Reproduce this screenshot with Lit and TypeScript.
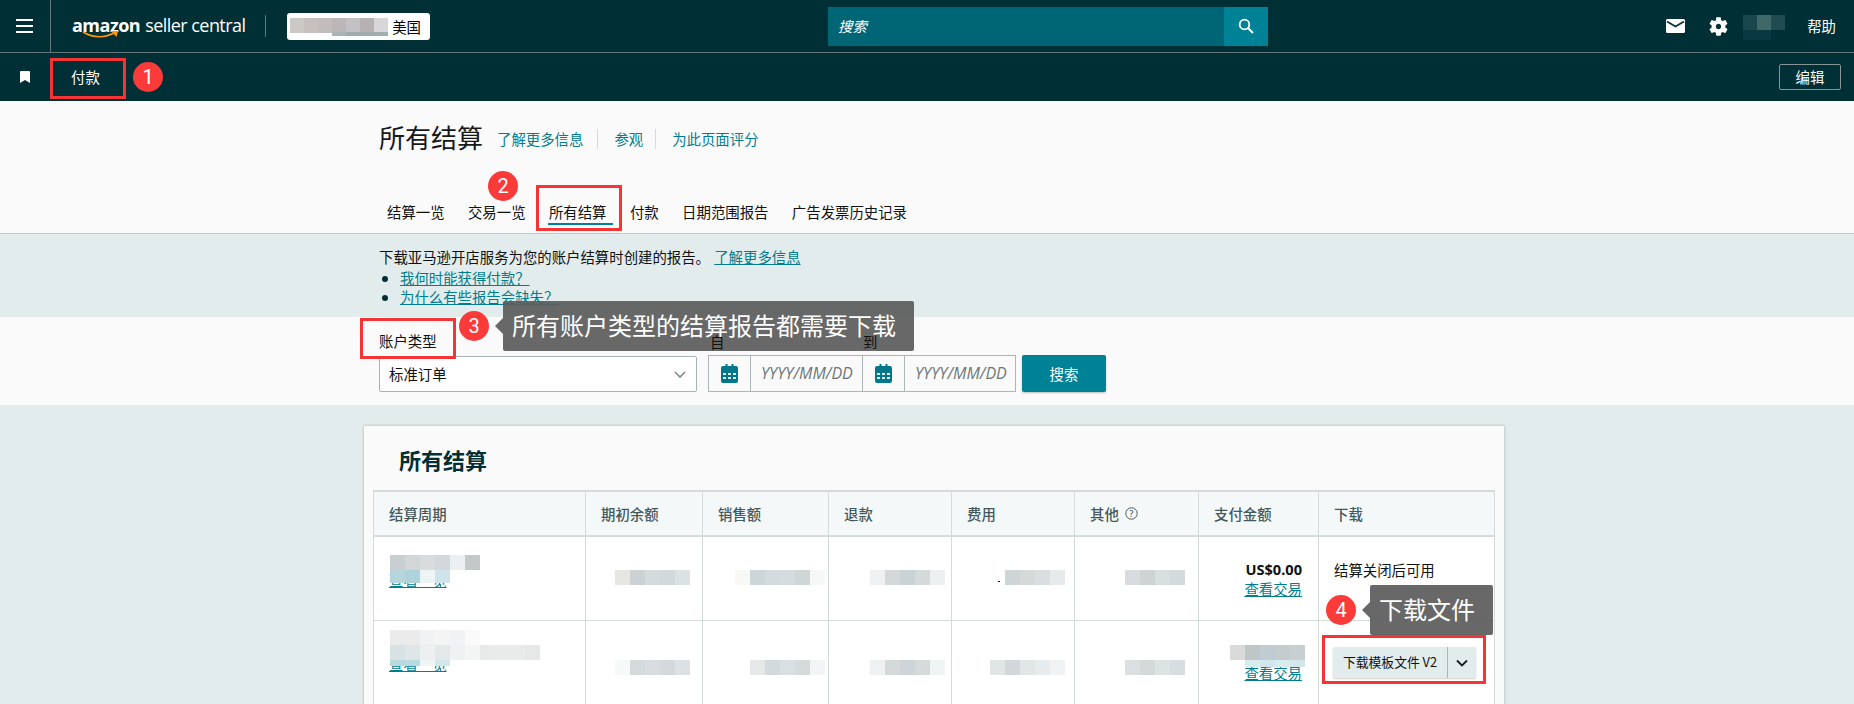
import { LitElement, html, css, svg } from "lit";
import { customElement } from "lit/decorators.js";

type Patch = { x: number; y: number; w?: number; h?: number; c: string[] };

// Blurred-out (mosaic) patches that cover private values: page position + one colour per 15px cell.
const PATCHES: Patch[] = [
  { x: 390, y: 555, c: ["#c9cfd0", "#d3d6d7", "#d8dcde", "#d3d8da", "#edf0f2", "#c3c9c9"] },
  { x: 390, y: 570, h: 13, c: ["#b7d5dc", "#aed3db", "#ecf4f6", "#cfe4ea"] },
  { x: 615, y: 570, c: ["#e6e6e3", "#ccd2d4", "#d3dbdd", "#d3d9db", "#dce2e4"] },
  { x: 735, y: 570, c: ["#f8f8f4", "#ccd5d8", "#d5dbdd", "#d5dcdf", "#d0d5d5", "#f6f7f7"] },
  { x: 870, y: 570, c: ["#eff0f2", "#d5d8d9", "#c9d2d5", "#d4d9d9", "#ecf0f1"] },
  { x: 1005, y: 570, c: ["#ced5d7", "#d5dad9", "#d9dfe0", "#e6eaea"] },
  { x: 1125, y: 570, c: ["#d9dcde", "#ced4d4", "#d9dfe0", "#d4dadc"] },
  { x: 390, y: 630, c: ["#ebebeb", "#ebebeb", "#f0f2f3", "#f4f4f4", "#f0f2f5", "#fafafa"] },
  { x: 390, y: 645, c: ["#d8e1e3", "#dee6e7", "#ecf0f1", "#e3e9ea", "#eff1f3", "#f3f4f4", "#e8eaea", "#e9ebeb", "#e9ebeb", "#e6e8e8"] },
  { x: 390, y: 660, c: ["#b9d9e0", "#b9d9e0", "#eef5f7", "#d3e6eb"], h: 6 },
  { x: 615, y: 660, c: ["#f7f8f8", "#d5dadc", "#d9dddf", "#d4d9dc", "#dde1e3"] },
  { x: 750, y: 660, c: ["#e6e7e7", "#d3dadd", "#dadfe2", "#d5dadb", "#f3f4f5"] },
  { x: 870, y: 660, c: ["#eff0f2", "#d6d9da", "#cdd5d8", "#d6dadb", "#f1f4f5"] },
  { x: 990, y: 660, c: ["#e1e5e5", "#d2d7d9", "#e2e6e7", "#e8ebed", "#f0f2f3"] },
  { x: 1125, y: 660, c: ["#dcdfe1", "#d4d9d9", "#dde2e3", "#d8dde0"] },
  { x: 1230, y: 645, c: ["#dadada", "#bfc6c8", "#bfcdd3", "#c4cccd", "#c7cfd1"] },
  { x: 1245, y: 660, c: ["#d8ecef", "#d2e7ec", "#d8ecef", "#d2e7ec"], h: 7 },
  { x: 998, y: 581, w: 2, h: 1, c: ["#222222"] },
  { x: 1743, y: 15, w: 14, c: ["#1a474d", "#3f6868", "#1f4b51"] },
  { x: 1743, y: 30, w: 14, h: 10, c: ["#0a3840", "#0a3840"] },
  { x: 290, y: 18, w: 14, c: ["#ccc8c6", "#c6c1bf", "#c2bdbc", "#bcb7b6", "#c3c1c4", "#b7b2b1", "#d8d6d8"] },
  { x: 332, y: 32, w: 14, h: 4, c: ["#a6b5b6", "#9dadae", "#9dadae", "#a0afb0"] },
];

const MARKS = [
  { n: "1", x: 133, y: 62 },
  { n: "2", x: 488, y: 171 },
  { n: "3", x: 459, y: 311 },
  { n: "4", x: 1326, y: 595 },
];

const BOXES = [
  { x: 50, y: 58, w: 76, h: 41 },
  { x: 536, y: 185, w: 86, h: 46 },
  { x: 360, y: 318, w: 96, h: 41 },
  { x: 1322, y: 635, w: 164, h: 49 },
];

const TIPS = [
  { t: "所有账户类型的结算报告都需要下载", x: 503, y: 301, w: 411 },
  { t: "下载文件", x: 1370, y: 585, w: 123 },
];

const TABS = ["结算一览", "交易一览", "所有结算", "付款", "日期范围报告", "广告发票历史记录"];
const HEADS = ["结算周期", "期初余额", "销售额", "退款", "费用", "其他", "支付金额", "下载"];

const calendar = svg`<svg width="17" height="19" viewBox="0 0 17 19"><path fill="#00778a" d="M2 2h2.500V0h2v2h4V0h2v2H15a2 2 0 0 1 2 2v13a2 2 0 0 1-2 2H2a2 2 0 0 1-2-2V4a2 2 0 0 1 2-2z"/><path fill="#e3ecec" d="M2 9h3v2H2zM7 9h3v2H7zM12 9h3v2h-3zM2 13h3v2H2zM7 13h3v2H7zM12 13h3v2h-3z"/></svg>`;

@customElement("app-root")
export class AppRoot extends LitElement {
  static styles = css`
    :host {
      display: block;
      position: relative;
      width: 1854px;
      height: 704px;
      overflow: hidden;
      background: #e3ecec;
      color: #0f1111;
      font: 14.4px/18px "Noto Sans CJK SC", "Noto Sans", sans-serif;
    }
    a { color: #007e90; text-decoration: none; }
    a.u { text-decoration: underline; }

    .top { height: 52px; display: flex; align-items: center; background: #002f36; border-bottom: 1px solid #64787b; }
    .burger { width: 51px; height: 52px; flex: none; box-sizing: border-box; border-right: 1px solid #64787b; display: flex; align-items: center; justify-content: center; padding-right: 1px; }
    .logo { margin: 4px 0 0 21px; width: 174px; height: 36px; position: relative; color: #fff; white-space: nowrap; display: flex; align-items: baseline; gap: 5px; line-height: 30px; }
    .logo b { font: 700 18px/30px "Open Sans", sans-serif; letter-spacing: -0.5px; }
    .logo span { font: 400 18px/30px "Open Sans", sans-serif; letter-spacing: -0.55px; }
    .logo svg { position: absolute; left: 10px; top: 21px; }
    .vsep { width: 1px; height: 22px; background: #64787b; margin-left: 19px; }
    .store { margin-left: 21px; width: 143px; height: 27px; background: #fff; border-radius: 3px; box-sizing: border-box; padding-right: 9px; text-align: right; color: #000; line-height: 27px; }
    .search { margin-left: 398px; width: 440px; height: 39px; display: flex; background: #006574; }
    .search i { flex: 1; color: #fff; font-style: italic; line-height: 37px; padding-left: 10px; }
    .search div { width: 44px; background: #008296; display: flex; align-items: center; justify-content: center; }
    .right { margin-left: auto; display: flex; align-items: center; color: #fff; padding-right: 18px; }
    .right .mail { margin-right: 22px; display: flex; }
    .right .gear { margin-right: 77px; display: flex; }

    .nav { height: 48px; background: #002f36; display: flex; align-items: center; color: #fff; }
    .nav svg { margin-left: 20px; }
    .nav .pay { margin-left: 41px; }
    .nav .edit { margin-left: auto; margin-right: 13px; width: 62px; height: 26px; box-sizing: border-box; border: 1px solid #879596; border-radius: 2px; text-align: center; line-height: 24px; }

    .head { height: 133px; box-sizing: border-box; background: #fafafa; border-bottom: 1px solid #c4c9c9; padding: 18px 0 0 379px; }
    .title { display: flex; align-items: center; height: 36px; }
    .title h1 { margin: 0 14px 0 0; font: 400 26px/36px "Noto Sans CJK SC", sans-serif; color: #16191a; }
    .title a { padding: 0 12px 0 16px; line-height: 20px; margin-top: 4px; border-left: 1px solid #d5dbdb; }
    .title a:first-of-type { padding: 0 14px 0 0; border-left: 0; }
    .tabs { display: flex; gap: 23.4px; margin: 48px 0 0 8px; height: 24px; line-height: 18px; }
    .tabs span { position: relative; }
    .tabs .on::after { content: ""; position: absolute; left: -1px; right: -6px; top: 20px; height: 2px; background: #008296; }

    .band { height: 83px; box-sizing: border-box; padding: 14px 0 0 379px; color: #0f1111; }
    .band div { line-height: 18px; }
    .band div a { margin-left: 1px; }
    .band ul { margin: 2px 0 0; padding: 0 0 0 21px; line-height: 19px; }
    .band li::marker { color: #002f36; }

    .filter { height: 88px; box-sizing: border-box; background: #fafafa; padding: 0 0 13px 379px; display: flex; align-items: flex-end; }
    .field { display: flex; flex-direction: column; }
    .field label { line-height: 20px; margin-bottom: 5px; }
    .select { width: 318px; height: 36px; box-sizing: border-box; background: #fff; border: 1px solid #a6b2b3; border-radius: 2px; padding: 0 9px; display: flex; align-items: center; justify-content: space-between; }
    .dates { margin-left: 11px; display: flex; flex-direction: column; position: relative; z-index: 2; }
    .dates .lab { position: absolute; top: -20px; line-height: 14px; }
    .dategroup { display: flex; height: 37px; box-sizing: border-box; border: 1px solid #a9b7b8; width: 308px; }
    .cal { width: 41px; flex: none; display: flex; align-items: center; justify-content: center; border-right: 1px solid #a9b7b8; }
    .inp { width: 112px; box-sizing: border-box; flex: none; font-style: italic; color: #6c7778; padding-left: 10px; line-height: 35px; font-family: "Open Sans", sans-serif; font-size: 16px; white-space: nowrap; overflow: hidden; }
    .inp.b { border-right: 1px solid #a9b7b8; }
    .go { margin-left: 6px; width: 84px; height: 37px; background: #008296; color: #fff; border-radius: 2px; text-align: center; line-height: 37px; box-shadow: 0 1px 2px rgba(0, 0, 0, .25); }

    .content { padding: 21px 0 0 364px; }
    .card { width: 1140px; box-sizing: border-box; background: #fafafa; padding: 0 9px; height: 300px; box-shadow: 0 0 3px rgba(0, 0, 0, .25); }
    .card h2 { margin: 0; height: 64px; box-sizing: border-box; padding: 18px 0 0 26px; font: 700 22px/30px "Noto Sans CJK SC", sans-serif; color: #002f36; }
    .table { border: solid #d5dbdb; border-width: 2px 1px 0; background: #fff; }
    .row { display: grid; grid-template-columns: 211px 117px 126px 123px 123px 124px 120px 176px; height: 84px; border-bottom: 1px solid #d5dbdb; box-sizing: border-box; }
    .row.th { height: 45px; background: #f5f8f8; color: #44595d; font-weight: 500; border-bottom-width: 2px; }
    .row > div { border-left: 1px solid #d5dbdb; padding: 24px 15px 0; line-height: 17px; box-sizing: border-box; }
    .row > div:first-child { border-left: 0; padding-top: 17px; }
    .row.th > div { padding: 0 15px; line-height: 18px; display: flex; align-items: center; gap: 6px; height: 43px; }
    .money { text-align: right; padding-right: 16px !important; }
    .money b { font: 700 14.6px/17px "Noto Sans", sans-serif; color: #0f1111; display: block; height: 19px; }
    .dlcell { padding-top: 26px !important; }
    .dl { display: flex; width: 143px; height: 31px; background: #e3ecec; border-radius: 2px; box-shadow: 0 1px 2px rgba(0, 0, 0, .2); font-size: 12.8px; line-height: 29px; color: #0f1111; margin-left: -1px; }
    .dl span { width: 114px; text-align: center; border-right: 1px solid #aab7b8; }
    .dl i { flex: 1; display: flex; align-items: center; justify-content: center; }

    .patch { position: absolute; display: flex; }
    .box { position: absolute; border: 3px solid #f53535; box-sizing: border-box; }
    .mark { position: absolute; width: 30px; height: 30px; border-radius: 50%; background: #fb3a3a; color: #fff; text-align: center; font: 400 20px/30px "Roboto", sans-serif; }
    .tip { position: absolute; height: 50px; box-sizing: border-box; background: rgba(92, 92, 92, .93); border-radius: 2px; color: #fff; font-size: 24px; line-height: 48px; padding-left: 9px; white-space: nowrap; }
    .tip::before { content: ""; position: absolute; left: -8px; top: 17px; border: 8px solid transparent; border-left: 0; border-right-color: rgba(92, 92, 92, .93); }
  `;

  render() {
    return html`
      <div class="top">
        <div class="burger">
          <svg width="17" height="14" viewBox="0 0 17 14"><path fill="#fff" d="M0 0h17v2H0zM0 6h17v2H0zM0 12h17v2H0z"/></svg>
        </div>
        <div class="logo">
          <b>amazon</b><span>seller central</span>
          <svg width="37" height="8" viewBox="0 0 37 8"><path fill="none" stroke="#f90" stroke-width="1.600" d="M1 1c10 6 21 6 31 1"/><path fill="#f90" d="M29 0l7 0-1.500 6z"/></svg>
        </div>
        <div class="vsep"></div>
        <div class="store">美国</div>
        <div class="search">
          <i>搜索</i>
          <div><svg width="16" height="16" viewBox="0 0 16 16"><circle cx="6.500" cy="6.500" r="4.800" fill="none" stroke="#fff" stroke-width="1.800"/><path stroke="#fff" stroke-width="2" d="M10 10l5 5"/></svg></div>
        </div>
        <div class="right">
          <span class="mail"><svg width="19" height="14" viewBox="0 0 19 14"><path fill="#fff" d="M1.500 0h16A1.500 1.500 0 0 1 19 1.500v11a1.500 1.500 0 0 1-1.500 1.500h-16A1.500 1.500 0 0 1 0 12.500v-11A1.500 1.500 0 0 1 1.500 0z"/><path fill="none" stroke="#002f36" stroke-width="1.600" d="M1 2.500L9.500 7.500 18 2.500"/></svg></span>
          <span class="gear"><svg width="23" height="23" viewBox="0 0 24 24"><path fill="#fff" d="M19.140 12.940c.04-.3.06-.61.06-.94 0-.32-.02-.64-.07-.94l2.030-1.580c.18-.14.23-.41.12-.61l-1.920-3.320c-.12-.22-.37-.29-.59-.22l-2.390.96c-.5-.38-1.030-.7-1.620-.94l-.36-2.540c-.04-.24-.24-.41-.48-.41h-3.840c-.24 0-.43.17-.47.41l-.36 2.540c-.59.24-1.130.57-1.620.94l-2.390-.96c-.22-.08-.47 0-.59.22L2.740 8.870c-.12.21-.08.47.12.61l2.030 1.580c-.05.3-.09.63-.09.94s.02.64.07.94l-2.030 1.580c-.18.14-.23.41-.12.61l1.920 3.320c.12.22.37.29.59.22l2.390-.96c.5.38 1.030.7 1.620.94l.36 2.540c.05.24.24.41.48.41h3.840c.24 0 .44-.17.47-.41l.36-2.540c.59-.24 1.130-.56 1.620-.94l2.390.96c.22.08.47 0 .59-.22l1.920-3.320c.12-.22.07-.47-.12-.61l-2.010-1.580zM12 14.800c-1.540 0-2.800-1.260-2.800-2.800s1.260-2.800 2.800-2.800 2.800 1.260 2.800 2.800-1.260 2.800-2.800 2.800z"/></svg></span>
          <span>帮助</span>
        </div>
      </div>
      <div class="nav">
        <svg width="10" height="12" viewBox="0 0 10 12"><path fill="#fff" d="M1 0h8a1 1 0 0 1 1 1v11L5 9l-5 3V1a1 1 0 0 1 1-1z"/></svg>
        <span class="pay">付款</span>
        <span class="edit">编辑</span>
      </div>

      <div class="head">
        <div class="title">
          <h1>所有结算</h1>
          <a>了解更多信息</a><a>参观</a><a>为此页面评分</a>
        </div>
        <div class="tabs">
          ${TABS.map((t, i) => html`<span class=${i === 2 ? "on" : ""}>${t}</span>`)}
        </div>
      </div>

      <div class="band">
        <div>下载亚马逊开店服务为您的账户结算时创建的报告。 <a class="u">了解更多信息</a></div>
        <ul>
          <li><a class="u">我何时能获得付款？</a></li>
          <li><a class="u">为什么有些报告会缺失？</a></li>
        </ul>
      </div>

      <div class="filter">
        <div class="field">
          <label>账户类型</label>
          <div class="select">标准订单
            <svg width="14" height="9" viewBox="0 0 14 9"><path fill="none" stroke="#7d8a8c" stroke-width="1.600" d="M2 2l5 5 5-5"/></svg>
          </div>
        </div>
        <div class="dates">
          <span class="lab" style="left:2px">自</span>
          <span class="lab" style="left:155px">到</span>
          <div class="dategroup">
            <div class="cal">${calendar}</div><div class="inp b">YYYY/MM/DD</div>
            <div class="cal">${calendar}</div><div class="inp">YYYY/MM/DD</div>
          </div>
        </div>
        <div class="go">搜索</div>
      </div>

      <div class="content">
        <div class="card">
          <h2>所有结算</h2>
          <div class="table">
            <div class="row th">
              ${HEADS.map((h) => html`<div>${h}${h === "其他"
                ? html`<svg width="13" height="13" viewBox="0 0 13 13"><circle cx="6.500" cy="6.500" r="5.700" fill="none" stroke="#44595d"/><text x="6.500" y="9.500" text-anchor="middle" font-size="8.500" fill="#44595d" font-family="Noto Sans">?</text></svg>`
                : ""}</div>`)}
            </div>
            <div class="row">
              <div><div>&nbsp;</div><a class="u">查看一览</a></div>
              <div></div><div></div><div></div><div></div><div></div>
              <div class="money"><b>US$0.00</b><a class="u">查看交易</a></div>
              <div>结算关闭后可用</div>
            </div>
            <div class="row">
              <div><div>&nbsp;</div><a class="u">查看一览</a></div>
              <div></div><div></div><div></div><div></div><div></div>
              <div class="money"><b></b><a class="u">查看交易</a></div>
              <div class="dlcell">
                <div class="dl"><span>下载模板文件 V2</span><i><svg width="12" height="8" viewBox="0 0 12 8"><path fill="none" stroke="#16191a" stroke-width="1.800" d="M1 1.500l5 5 5-5"/></svg></i></div>
              </div>
            </div>
          </div>
        </div>
      </div>

      ${PATCHES.map((p) => html`<div class="patch" style="left:${p.x}px;top:${p.y}px">
        ${p.c.map((c) => html`<div style="width:${p.w ?? 15}px;height:${p.h ?? 15}px;background:${c}"></div>`)}
      </div>`)}
      ${TIPS.map((t) => html`<div class="tip" style="left:${t.x}px;top:${t.y}px;width:${t.w}px">${t.t}</div>`)}
      ${BOXES.map((b) => html`<div class="box" style="left:${b.x}px;top:${b.y}px;width:${b.w}px;height:${b.h}px"></div>`)}
      ${MARKS.map((m) => html`<div class="mark" style="left:${m.x}px;top:${m.y}px">${m.n}</div>`)}
    `;
  }
}
